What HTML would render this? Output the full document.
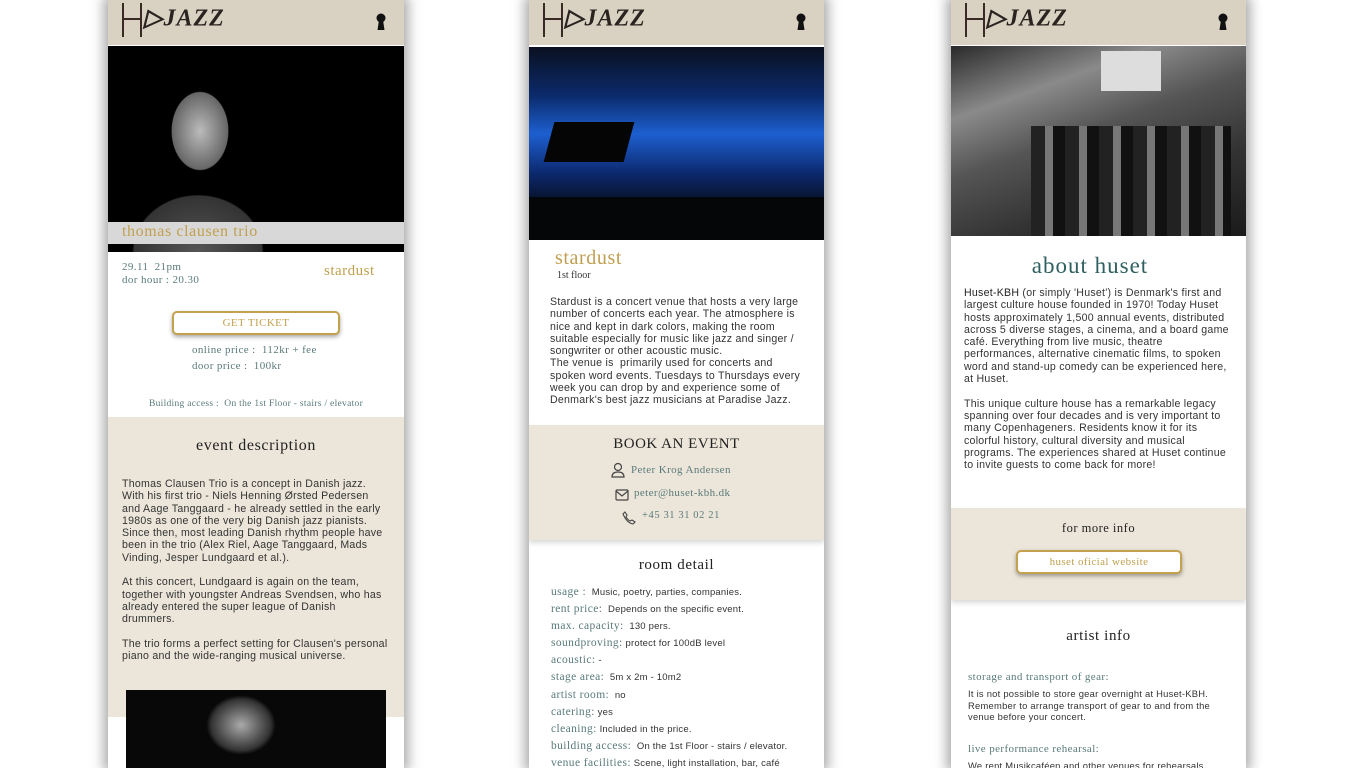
<!DOCTYPE html>
<html><head><meta charset="utf-8"><style>
*{margin:0;padding:0;box-sizing:border-box}
body{width:1366px;height:768px;background:#fff;position:relative;overflow:hidden;font-family:"Liberation Sans",sans-serif}
.p{position:absolute;top:0;width:296px;height:768px;background:#fff;box-shadow:0 0 12px 4px rgba(0,0,0,.35);overflow:hidden}
.hd{position:absolute;left:0;top:0;width:100%;height:45px;background:#d9d2c2}
.logo{position:absolute;left:14px;top:3px;font-family:"Liberation Serif",serif;font-weight:bold;font-style:italic;font-size:24px;color:#2a2320;letter-spacing:1px}
.logo .h{display:inline-block;width:20px;height:34px;border:2px solid #3a2a25;border-top:none;border-bottom:none;position:relative;vertical-align:middle;margin-right:2px}
.logo .h:after{content:"";position:absolute;left:0;right:0;top:15px;border-top:2px solid #3a2a25}
.key{position:absolute;right:18px;top:13px;width:10px;height:17px}
.a{position:absolute}
.serif{font-family:"Liberation Serif",serif}
.gold{color:#c0a050}
.teal{color:#5a7a7a}
.body{font-size:10.6px;line-height:12.3px;color:#333;letter-spacing:0.25px}
.btn{position:absolute;border:2px solid #c4a14e;border-radius:5px;background:#fff;box-shadow:0 2px 4px rgba(0,0,0,.35);text-align:center;font-family:"Liberation Serif",serif;color:#c0a050;font-size:11px;letter-spacing:.4px}
.rd{font-size:9.5px;color:#333;line-height:17.1px;letter-spacing:.2px}
.rd b{font-family:"Liberation Serif",serif;font-weight:normal;color:#5a7a7a;font-size:11.5px;letter-spacing:.4px}
</style></head><body>

<!-- panel 1 -->
<div class="p" style="left:108px">
<div class="hd"><div class="logo"><span class="h"></span>▷JAZZ</div>
<svg class="key" viewBox="0 0 10 17"><circle cx="5" cy="5" r="4.5" fill="#111"/><path d="M3 7 L1.5 17 H8.5 L7 7Z" fill="#111"/></svg></div>
<div class="a" style="left:0;top:46px;width:296px;height:206px;background:#000">
<div class="a" style="left:20px;top:30px;width:140px;height:176px;background:radial-gradient(ellipse 40px 55px at 72px 55px,#bbb,#666 70%,transparent 72%),radial-gradient(ellipse 80px 70px at 70px 176px,#555,#333 80%,transparent 82%)"></div>
</div>
<div class="a serif gold" style="left:0;top:222px;width:296px;height:22px;background:#d8d8d8;font-size:16px;padding:1px 14px;letter-spacing:.6px">thomas clausen trio</div>
<div class="a serif teal" style="left:14px;top:261px;font-size:11px;line-height:13px;letter-spacing:.4px">29.11 &nbsp;21pm<br>dor hour : 20.30</div>
<div class="a serif gold" style="left:216px;top:263px;font-size:15px;letter-spacing:.5px">stardust</div>
<div class="btn" style="left:64px;top:311px;width:168px;height:24px;line-height:20px">GET TICKET</div>
<div class="a serif teal" style="left:84px;top:342px;font-size:11px;line-height:16px;letter-spacing:.4px">online price : &nbsp;112kr + fee<br>door price : &nbsp;100kr</div>
<div class="a serif teal" style="left:0;width:296px;text-align:center;top:399px;font-size:9.5px;letter-spacing:.3px">Building access : &nbsp;On the 1st Floor - stairs / elevator</div>
<div class="a" style="left:0;top:417px;width:296px;height:300px;background:#ece6da"></div>
<div class="a serif" style="left:0;width:296px;text-align:center;top:437px;font-size:16px;color:#222;letter-spacing:.6px">event description</div>
<div class="a body" style="left:14px;top:478px;width:268px">Thomas Clausen Trio is a concept in Danish jazz. With his first trio - Niels Henning Ørsted Pedersen and Aage Tanggaard - he already settled in the early 1980s as one of the very big Danish jazz pianists. Since then, most leading Danish rhythm people have been in the trio (Alex Riel, Aage Tanggaard, Mads Vinding, Jesper Lundgaard et al.).<br><br>At this concert, Lundgaard is again on the team, together with youngster Andreas Svendsen, who has already entered the super league of Danish drummers.<br><br>The trio forms a perfect setting for Clausen's personal piano and the wide-ranging musical universe.</div>
<div class="a" style="left:18px;top:690px;width:260px;height:80px;background:#080808"><div class="a" style="left:80px;top:5px;width:70px;height:60px;border-radius:50%;background:radial-gradient(#aaa,#333 60%,transparent 70%)"></div></div>
</div>

<!-- panel 2 -->
<div class="p" style="left:529px;width:295px">
<div class="hd"><div class="logo"><span class="h"></span>▷JAZZ</div>
<svg class="key" viewBox="0 0 10 17"><circle cx="5" cy="5" r="4.5" fill="#111"/><path d="M3 7 L1.5 17 H8.5 L7 7Z" fill="#111"/></svg></div>
<div class="a" style="left:0;top:47px;width:295px;height:193px;background:linear-gradient(180deg,#0a1020 0%,#0b2a6a 25%,#1d5fd0 45%,#0d2a70 65%,#05080f 85%,#020306 100%)">
<div class="a" style="left:20px;top:75px;width:80px;height:40px;background:#050505;transform:skewX(-15deg)"></div>
<div class="a" style="left:0;top:150px;width:295px;height:43px;background:#040608"></div>
</div>
<div class="a serif gold" style="left:26px;top:247px;font-size:20px;letter-spacing:.6px">stardust</div>
<div class="a serif" style="left:28px;top:270px;font-size:10px;color:#333">1st floor</div>
<div class="a body" style="left:21px;top:296px;width:256px">Stardust is a concert venue that hosts a very large number of concerts each year. The atmosphere is nice and kept in dark colors, making the room suitable especially for music like jazz and singer / songwriter or other acoustic music.<br>The venue is &nbsp;primarily used for concerts and spoken word events. Tuesdays to Thursdays every week you can drop by and experience some of Denmark's best jazz musicians at Paradise Jazz.</div>
<div class="a" style="left:0;top:425px;width:295px;height:115px;background:#ece6da;box-shadow:0 3px 5px rgba(0,0,0,.15)"></div>
<div class="a serif" style="left:0;width:295px;text-align:center;top:436px;font-size:15px;color:#222;letter-spacing:.5px">BOOK AN EVENT</div>
<svg class="a" style="left:82px;top:462px" width="14" height="16" viewBox="0 0 14 16" fill="none" stroke="#444" stroke-width="1.2"><circle cx="7" cy="5" r="3.5"/><path d="M1 15 Q1 10 7 10 Q13 10 13 15Z"/></svg>
<div class="a serif teal" style="left:102px;top:464px;font-size:11px;letter-spacing:.4px">Peter Krog Andersen</div>
<svg class="a" style="left:86px;top:489px" width="14" height="12" viewBox="0 0 14 12" fill="none" stroke="#444" stroke-width="1.2"><rect x="1" y="1" width="12" height="10" rx="1"/><path d="M1 2 L7 7 L13 2"/></svg>
<div class="a serif teal" style="left:105px;top:487px;font-size:11px;letter-spacing:.4px">peter@huset-kbh.dk</div>
<svg class="a" style="left:93px;top:511px" width="14" height="14" viewBox="0 0 14 14" fill="none" stroke="#444" stroke-width="1.1"><path d="M3 1 L5 4 L4 6 Q6 9 8 10 L10 9 L13 11 L11 13 Q5 12 1 3Z"/></svg>
<div class="a serif teal" style="left:113px;top:510px;font-size:10.5px;letter-spacing:.6px">+45 31 31 02 21</div>
<div class="a serif" style="left:0;width:295px;text-align:center;top:557px;font-size:15px;color:#222;letter-spacing:.6px">room detail</div>
<div class="a rd" style="left:22px;top:584px;width:270px">
<b>usage :</b> &nbsp;Music, poetry, parties, companies.<br>
<b>rent price:</b> &nbsp;Depends on the specific event.<br>
<b>max. capacity:</b> &nbsp;130 pers.<br>
<b>soundproving:</b> protect for 100dB level<br>
<b>acoustic:</b> -<br>
<b>stage area:</b> &nbsp;5m x 2m - 10m2<br>
<b>artist room:</b> &nbsp;no<br>
<b>catering:</b> yes<br>
<b>cleaning:</b> Included in the price.<br>
<b>building access:</b> &nbsp;On the 1st Floor - stairs / elevator.<br>
<b>venue facilities:</b> Scene, light installation, bar, café</div>
</div>

<!-- panel 3 -->
<div class="p" style="left:951px;width:295px">
<div class="hd"><div class="logo"><span class="h"></span>▷JAZZ</div>
<svg class="key" viewBox="0 0 10 17"><circle cx="5" cy="5" r="4.5" fill="#111"/><path d="M3 7 L1.5 17 H8.5 L7 7Z" fill="#111"/></svg></div>
<div class="a" style="left:0;top:46px;width:295px;height:190px;background:linear-gradient(160deg,#2a2a2a 0%,#8a8a8a 25%,#555 45%,#333 70%,#1a1a1a 100%)">
<div class="a" style="left:150px;top:5px;width:60px;height:40px;background:#ddd"></div>
<div class="a" style="left:80px;top:80px;width:200px;height:110px;background:repeating-linear-gradient(90deg,#222 0 14px,#777 14px 22px,#111 22px 34px)"></div>
</div>
<div class="a serif" style="left:0;width:278px;text-align:center;top:253px;font-size:23px;color:#2f5f5f;letter-spacing:1px">about huset</div>
<div class="a body" style="left:13px;top:287px;width:268px"><span style="color:#222">Huset-KBH</span> (or simply 'Huset') is Denmark's first and largest culture house founded in 1970! Today Huset hosts approximately 1,500 annual events, distributed across 5 diverse stages, a cinema, and a board game café. Everything from live music, theatre performances, alternative cinematic films, to spoken word and stand-up comedy can be experienced here, at Huset.<br><br>This unique culture house has a remarkable legacy spanning over four decades and is very important to many Copenhageners. Residents know it for its colorful history, cultural diversity and musical programs. The experiences shared at Huset continue to invite guests to come back for more!</div>
<div class="a" style="left:0;top:508px;width:295px;height:92px;background:#ece6da;box-shadow:0 3px 5px rgba(0,0,0,.15)"></div>
<div class="a serif" style="left:0;width:295px;text-align:center;top:521px;font-size:12.5px;color:#222;letter-spacing:.5px">for more info</div>
<div class="btn" style="left:65px;top:550px;width:166px;height:24px;line-height:20px">huset oficial website</div>
<div class="a serif" style="left:0;width:295px;text-align:center;top:628px;font-size:15px;color:#222;letter-spacing:.6px">artist info</div>
<div class="a serif teal" style="left:17px;top:671px;font-size:11px;letter-spacing:.4px">storage and transport of gear:</div>
<div class="a body" style="left:17px;top:688px;width:262px;font-size:9.4px;line-height:11.6px">It is not possible to store gear overnight at Huset-KBH. Remember to arrange transport of gear to and from the venue before your concert.</div>
<div class="a serif teal" style="left:17px;top:743px;font-size:11px;letter-spacing:.4px">live performance rehearsal:</div>
<div class="a body" style="left:17px;top:760px;width:270px;font-size:9.4px">We rent Musikcaféen and other venues for rehearsals</div>
</div>
</body></html>
